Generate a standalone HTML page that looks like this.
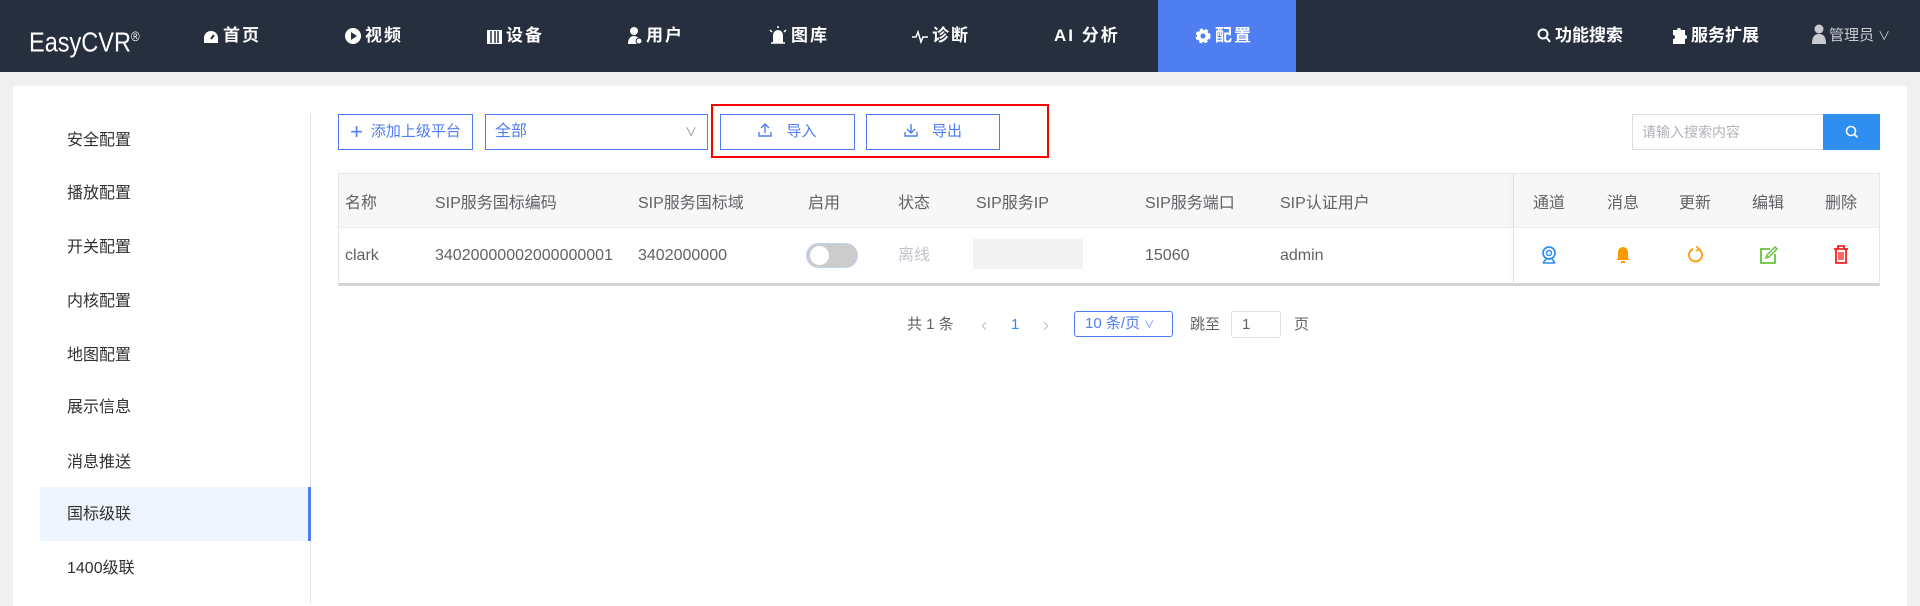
<!DOCTYPE html>
<html><head><meta charset="utf-8"><style>
*{margin:0;padding:0;box-sizing:border-box}
body{width:1920px;height:599px;background:#f0f0f0;font-family:"Liberation Sans","Noto Sans CJK SC",sans-serif;position:relative;overflow:hidden;color:#606266}
.a{position:absolute;white-space:nowrap}
.nav{position:absolute;left:0;top:0;width:1920px;height:72px;background:#262f3e}
.ni{position:absolute;top:0;height:72px;line-height:72px;color:#fff;font-weight:bold;font-size:17px;letter-spacing:2px}
.ni svg{vertical-align:-3px;margin-right:4px}
.card{position:absolute;left:13px;top:86px;width:1894px;height:520px;background:#fff}
.side{font-size:16px;color:#303133;line-height:20px}
.btn{position:absolute;border:1px solid #4f7ef0;color:#4f7ef0;font-size:15px;height:36px;line-height:34px;text-align:center}
.th{font-size:16px;color:#606266;top:194px;line-height:20px}
.td{font-size:16px;color:#606266;top:246px;line-height:20px}
.pg{font-size:15px;color:#606266;top:315px;line-height:20px}
</style></head><body>
<div class="nav">
<div class="a" style="left:29px;top:0;line-height:72px;color:#fff;font-size:28px;transform:scaleX(.84);transform-origin:0 50%">EasyCVR<sup style="font-size:14px">®</sup></div>
<div class="ni" style="left:203px"><svg width="16" height="14" viewBox="0 0 16 14"><path d="M8 1a7 7 0 0 0-7 7v5h14V8a7 7 0 0 0-7-7z" fill="#fff"/><path d="M8 9l3-4" stroke="#262f3e" stroke-width="2"/></svg>首页</div>
<div class="ni" style="left:345px"><svg width="16" height="16"><circle cx="8" cy="8" r="8" fill="#fff"/><path d="M6 4l6 4-6 4z" fill="#262f3e"/></svg>视频</div>
<div class="ni" style="left:487px"><svg width="15" height="14"><path d="M0 0h15v14H0z" fill="#fff"/><path d="M4 1v12M8 1v12M11 1v12" stroke="#262f3e" stroke-width="1.5"/></svg>设备</div>
<div class="ni" style="left:628px"><svg width="14" height="18"><circle cx="6" cy="5" r="4" fill="#fff"/><path d="M0 18c0-6 3-8 6-8s5 2 6 4v4z" fill="#fff"/><circle cx="11" cy="15" r="3" fill="#fff" stroke="#262f3e"/></svg>用户</div>
<div class="ni" style="left:769px"><svg width="18" height="18"><path d="M4 17V9a5 5 0 0 1 10 0v8z" fill="#fff"/><path d="M2 17h14M9 0v2M1 4l2 2M17 4l-2 2" stroke="#fff" stroke-width="1.5"/></svg>图库</div>
<div class="ni" style="left:912px"><svg width="16" height="14"><path d="M0 7h4l2-5 3 10 2-5h5" stroke="#fff" fill="none" stroke-width="1.5"/></svg>诊断</div>
<div class="ni" style="left:1054px">AI 分析</div>
<div class="a" style="left:1158px;top:0;width:138px;height:72px;background:#4f7ef0"></div>
<div class="ni" style="left:1195px"><svg width="16" height="16" viewBox="0 0 16 16"><circle cx="8" cy="8" r="6" fill="#fff" stroke="#fff" stroke-width="3" stroke-dasharray="3 2"/><circle cx="8" cy="8" r="2.5" fill="#4f7ef0"/></svg>配置</div>
<div class="ni" style="left:1537px;letter-spacing:0"><svg width="14" height="16"><circle cx="6" cy="6" r="4.5" stroke="#fff" stroke-width="2" fill="none"/><path d="M9 9l4 5" stroke="#fff" stroke-width="2"/></svg>功能搜索</div>
<div class="ni" style="left:1671px;letter-spacing:0"><svg width="16" height="18"><path d="M2 4h4a2 2 0 0 1 4 0h4v5a2 2 0 0 1 0 4v5H2v-5a2 2 0 0 0 0-4z" fill="#fff"/></svg>服务扩展</div>
<div class="a" style="left:1812px;top:0;line-height:72px;color:#c8cbd0;font-size:15px"><svg width="14" height="20" style="vertical-align:-4px;margin-right:3px"><circle cx="7" cy="5" r="4.5" fill="#c8cbd0"/><path d="M0 20c0-8 3-10 7-10s7 2 7 10z" fill="#c8cbd0"/></svg>管理员 <span style="font-size:12px">∨</span></div>
</div>
<div class="card"></div>
<div class="a" style="left:310px;top:114px;width:1px;height:490px;background:#e4e4e4"></div>
<div class="a side" style="left:67px;top:131px">安全配置</div>
<div class="a side" style="left:67px;top:184px">播放配置</div>
<div class="a side" style="left:67px;top:238px">开关配置</div>
<div class="a side" style="left:67px;top:292px">内核配置</div>
<div class="a side" style="left:67px;top:346px">地图配置</div>
<div class="a side" style="left:67px;top:398px">展示信息</div>
<div class="a side" style="left:67px;top:453px">消息推送</div>
<div class="a" style="left:40px;top:487px;width:271px;height:54px;background:#eef5fe;border-right:3px solid #4f7ef0"></div>
<div class="a side" style="left:67px;top:505px">国标级联</div>
<div class="a side" style="left:67px;top:559px">1400级联</div>

<div class="btn" style="left:338px;top:114px;width:135px;font-size:15px"><span style="font-size:22px;vertical-align:-3px;margin-right:8px">+</span>添加上级平台</div>
<div class="btn" style="left:485px;top:114px;width:223px;text-align:left;padding-left:9px;font-size:16px">全部<span style="position:absolute;right:10px;color:#909399;font-size:12px">∨</span></div>
<div class="a" style="left:711px;top:104px;width:338px;height:54px;border:2px solid #f00"></div>
<div class="btn" style="left:720px;top:114px;width:135px"><svg width="14" height="14" style="vertical-align:-1px;margin-right:14px"><path d="M7 10V1M3 5l4-4 4 4M1 9v4h12V9" stroke="#4f7ef0" fill="none" stroke-width="1.4"/></svg>导入</div>
<div class="btn" style="left:866px;top:114px;width:134px"><svg width="14" height="14" style="vertical-align:-1px;margin-right:14px"><path d="M7 1v9M3 6l4 4 4-4M1 9v4h12V9" stroke="#4f7ef0" fill="none" stroke-width="1.4"/></svg>导出</div>
<div class="a" style="left:1632px;top:114px;width:192px;height:36px;border:1px solid #dcdfe6;font-size:14px;color:#b0b3b8;line-height:34px;padding-left:9px">请输入搜索内容</div>
<div class="a" style="left:1823px;top:114px;width:57px;height:36px;background:#2f8ff0"><svg width="14" height="14" style="position:absolute;left:22px;top:11px"><circle cx="6" cy="6" r="4.5" stroke="#fff" stroke-width="1.6" fill="none"/><path d="M9.5 9.5l3 3" stroke="#fff" stroke-width="1.6"/></svg></div>

<div class="a" style="left:338px;top:173px;width:1542px;height:113px;border:1px solid #e6e6e6;border-bottom:3px solid #d4d4d4"></div>
<div class="a" style="left:339px;top:174px;width:1540px;height:54px;background:#f7f7f8;border-bottom:1px solid #ebeef5"></div>
<div class="a" style="left:1513px;top:174px;width:1px;height:110px;background:#e0e0e0;box-shadow:-3px 0 6px rgba(0,0,0,.08)"></div>
<div class="a th" style="left:345px">名称</div>
<div class="a th" style="left:435px">SIP服务国标编码</div>
<div class="a th" style="left:638px">SIP服务国标域</div>
<div class="a th" style="left:808px">启用</div>
<div class="a th" style="left:898px">状态</div>
<div class="a th" style="left:976px">SIP服务IP</div>
<div class="a th" style="left:1145px">SIP服务端口</div>
<div class="a th" style="left:1280px">SIP认证用户</div>
<div class="a th" style="left:1533px">通道</div>
<div class="a th" style="left:1607px">消息</div>
<div class="a th" style="left:1679px">更新</div>
<div class="a th" style="left:1752px">编辑</div>
<div class="a th" style="left:1825px">删除</div>
<div class="a td" style="left:345px">clark</div>
<div class="a td" style="left:435px">34020000002000000001</div>
<div class="a td" style="left:638px">3402000000</div>
<div class="a" style="left:806px;top:243px;width:52px;height:25px;border-radius:13px;background:#ccc;border:1px solid #c0d4f0"><div style="position:absolute;left:3px;top:2px;width:19px;height:19px;border-radius:50%;background:#fff"></div></div>
<div class="a td" style="left:898px;color:#c0c4cc">离线</div>
<div class="a" style="left:973px;top:239px;width:110px;height:30px;background:#f3f3f3"></div>
<div class="a td" style="left:1145px">15060</div>
<div class="a td" style="left:1280px">admin</div>
<svg class="a" style="left:1540px;top:246px" width="18" height="18"><circle cx="9" cy="7" r="6" stroke="#2f8ff0" stroke-width="1.8" fill="none"/><circle cx="9" cy="7" r="2.5" stroke="#2f8ff0" stroke-width="1.5" fill="none"/><path d="M3 17l3-4M15 17l-3-4M3 17h12" stroke="#2f8ff0" stroke-width="1.5"/></svg>
<svg class="a" style="left:1615px;top:246px" width="16" height="18"><path d="M8 1a5 5 0 0 0-5 5v6l-2 2h14l-2-2V6a5 5 0 0 0-5-5z" fill="#f90"/><path d="M6 16h4" stroke="#f90" stroke-width="2"/></svg>
<svg class="a" style="left:1687px;top:246px" width="18" height="18"><path d="M11 3a6.5 6.5 0 1 1-5 0" stroke="#f90" stroke-width="1.8" fill="none"/><path d="M9 0l3 3-3 2" stroke="#f90" stroke-width="1.5" fill="none"/></svg>
<svg class="a" style="left:1760px;top:246px" width="18" height="18"><path d="M10 3H1v14h14V8" stroke="#67c23a" stroke-width="1.8" fill="none"/><path d="M6 12l1-3 8-8 2 2-8 8z" stroke="#67c23a" stroke-width="1.5" fill="none"/></svg>
<svg class="a" style="left:1833px;top:245px" width="16" height="19"><path d="M1 4h14M5 4V1h6v3M3 4v14h10V4" stroke="#f00" stroke-width="1.6" fill="none"/><path d="M6 7v8M8 7v8M10 7v8" stroke="#f00" stroke-width="1.2"/></svg>

<div class="a pg" style="left:907px">共 1 条</div>
<div class="a pg" style="left:981px;color:#c0c4cc;font-size:18px">‹</div>
<div class="a pg" style="left:1011px;color:#2f8ff0">1</div>
<div class="a pg" style="left:1043px;color:#c0c4cc;font-size:18px">›</div>
<div class="a" style="left:1074px;top:311px;width:99px;height:26px;border:1px solid #4f7ef0;border-radius:3px;font-size:15px;color:#4f7ef0;line-height:24px;padding-left:10px">10 条/页 <span style="font-size:10px">∨</span></div>
<div class="a pg" style="left:1190px">跳至</div>
<div class="a" style="left:1231px;top:311px;width:50px;height:27px;border:1px solid #dcdfe6;border-radius:3px;font-size:15px;line-height:25px;padding-left:10px">1</div>
<div class="a pg" style="left:1294px">页</div>
</body></html>
